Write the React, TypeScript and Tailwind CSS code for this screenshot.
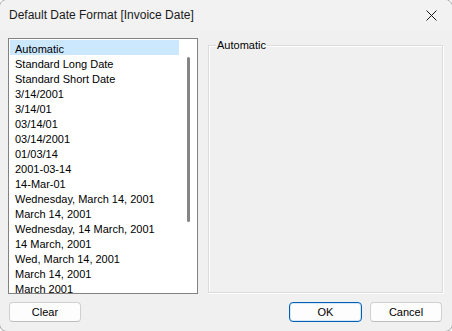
const FORMATS = [
  'Automatic',
  'Standard Long Date',
  'Standard Short Date',
  '3/14/2001',
  '3/14/01',
  '03/14/01',
  '03/14/2001',
  '01/03/14',
  '2001-03-14',
  '14-Mar-01',
  'Wednesday, March 14, 2001',
  'March 14, 2001',
  'Wednesday, 14 March, 2001',
  '14 March, 2001',
  'Wed, March 14, 2001',
  'March 14, 2001',
  'March 2001',
];

function CloseIcon() {
  return (
    <svg width="11" height="11" viewBox="0 0 11 11" fill="none">
      <path d="M0.5 0.5L10.5 10.5M10.5 0.5L0.5 10.5" stroke="#1a1a1a" strokeWidth="1" />
    </svg>
  );
}

export default function App() {
  const selected = 0;

  return (
    <div className="w-[452px] h-[331px] overflow-hidden bg-[#f7f7f7] font-['Liberation_Sans',Arial,sans-serif] text-[#000]">
      <div className="-m-px w-[454px] h-[333px] rounded-[8px] border border-[#a8a8a8] bg-[#f0f0f0] overflow-hidden flex flex-col">
        {/* Title bar */}
        <div className="h-[30px] flex items-center justify-between pl-[9px] pr-[11px] bg-[#f2f2f2]">
          <span className="text-[12px] leading-none text-[#1a1a1a]">Default Date Format [Invoice Date]</span>
          <button type="button" className="w-[20px] h-[20px] flex items-center justify-center">
            <CloseIcon />
          </button>
        </div>

        {/* Body */}
        <div className="flex items-start gap-[10px] pl-[8px] pt-[8px] text-[11px]">
          {/* Listbox */}
          <div className="w-[190px] h-[256px] border border-[#828282] bg-white flex overflow-hidden">
            <div className="w-[170px] pl-px pt-px">
              {FORMATS.map((f, i) => (
                <div
                  key={i}
                  className={`h-[15px] leading-[18px] pl-[5px] whitespace-nowrap ${
                    i === selected ? 'bg-[#cce8ff]' : ''
                  }`}
                >
                  {f}
                </div>
              ))}
            </div>
            <div className="flex-1 pl-[8px] pt-[18px]">
              <div className="w-[3px] h-[165px] rounded-full bg-[#858585]" />
            </div>
          </div>

          {/* Preview group */}
          <fieldset className="w-[235px] h-[255px] border border-[#dcdcdc] px-[7px] shadow-[inset_1px_1px_0_#ffffff,1px_1px_0_#ffffff]">
            <legend className="px-px leading-[15px] text-[11px]">Automatic</legend>
          </fieldset>
        </div>

        {/* Buttons */}
        <div className="flex items-center pl-[9px] pr-[10px] pt-[8px] text-[11px]">
          <button
            type="button"
            className="w-[72px] h-[20px] rounded-[4px] border border-[#d0d0d0] border-b-[#bdbdbd] bg-[#fdfdfd]"
          >
            Clear
          </button>
          <div className="flex-1" />
          <button
            type="button"
            className="w-[73px] h-[20px] rounded-[4px] border border-[#005fb8] bg-[#fdfdfd] shadow-[inset_0_0_0_1px_#d6e6f5]"
          >
            OK
          </button>
          <button
            type="button"
            className="ml-[8px] w-[72px] h-[20px] rounded-[4px] border border-[#d0d0d0] border-b-[#bdbdbd] bg-[#fdfdfd]"
          >
            Cancel
          </button>
        </div>
      </div>
    </div>
  );
}
